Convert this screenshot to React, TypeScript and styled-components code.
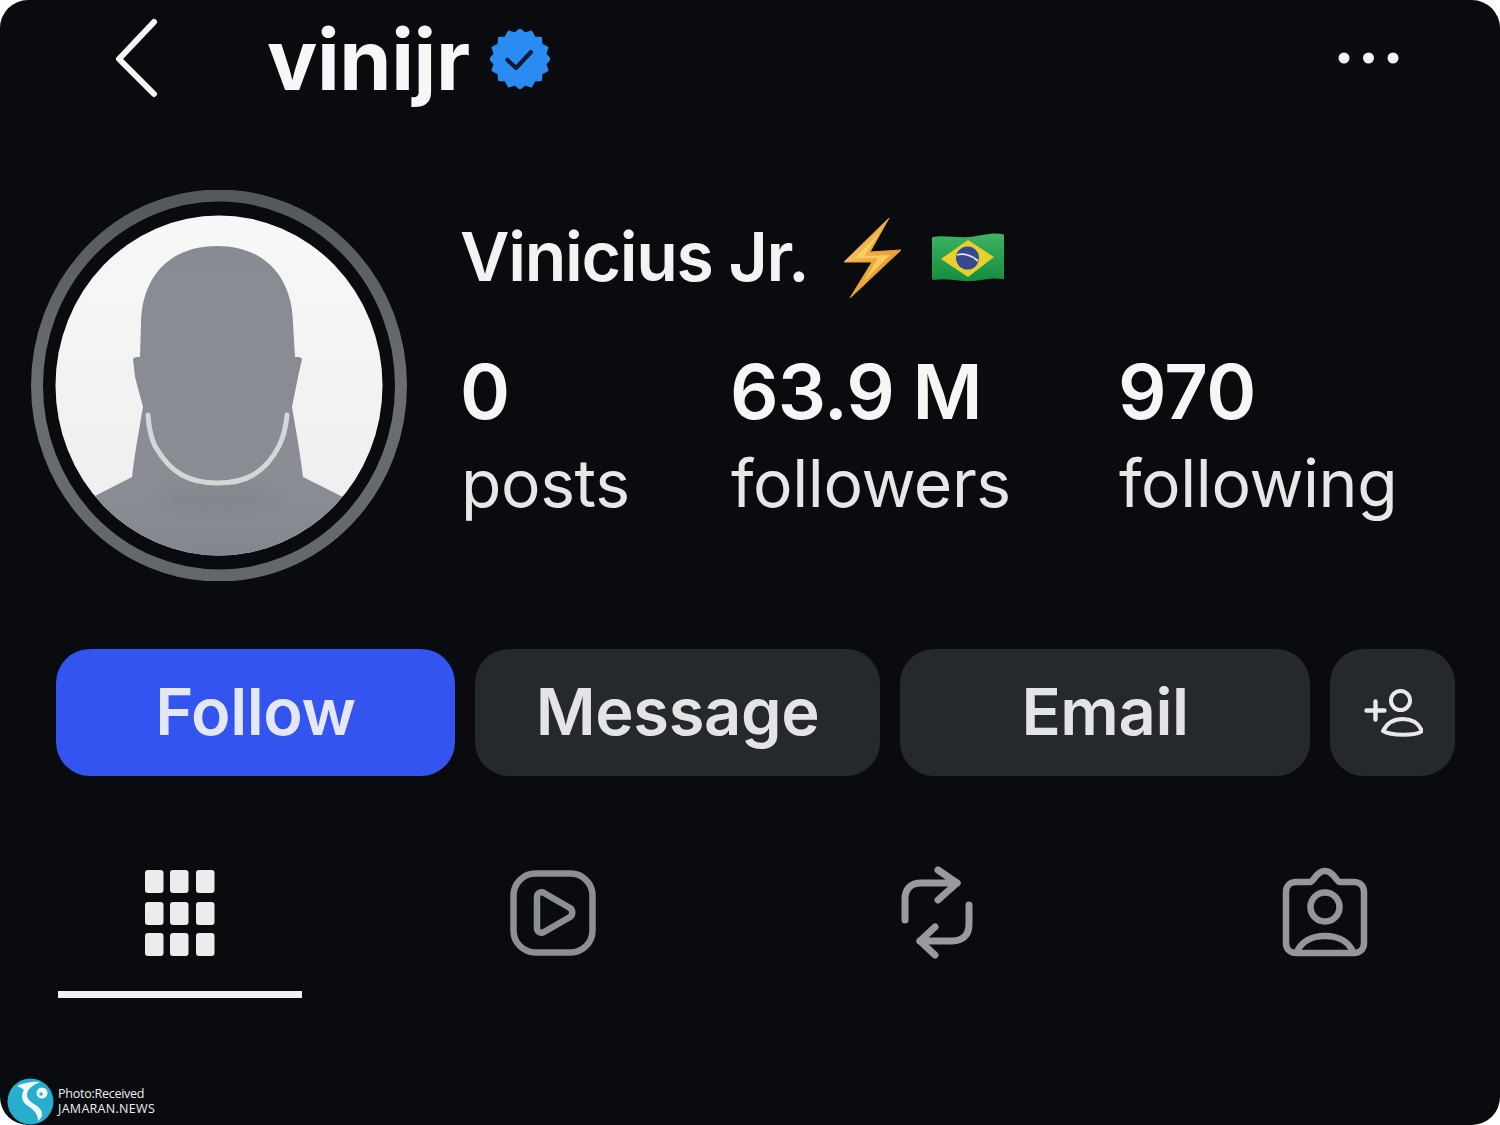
import React from "react";
import styled, { createGlobalStyle } from "styled-components";

const Global = createGlobalStyle`
  html, body { margin: 0; padding: 0; background: #ffffff; }
  #root { width: 1500px; height: 1125px; overflow: hidden; }
`;

const Frame = styled.main`
  position: relative;
  width: 1500px;
  height: 1125px;
  box-sizing: border-box;
  background: #090b0f;
  border-radius: 28px;
  overflow: hidden;
  font-family: Inter, "Liberation Sans", sans-serif;
  color: #f4f5f6;
`;

const Header = styled.header`
  display: flex;
  align-items: center;
  height: 116px;
  padding: 0 100px 0 115px;
`;

const BackButton = styled.div`
  display: flex;
  width: 152px;
`;

const Handle = styled.h1`
  margin: 3px 0 0;
  font-size: 84px;
  line-height: 113px;
  font-weight: 700;
  letter-spacing: -0.4px;
  color: #f7f7f8;
`;

const Spacer = styled.div`
  flex: 1;
`;

const Profile = styled.section`
  display: flex;
  margin-top: 74px;
  padding-left: 31px;
`;

const Info = styled.div`
  margin-left: 53px;
  display: flex;
  flex-direction: column;
`;

const NameRow = styled.div`
  display: flex;
  align-items: center;
  height: 108px;
  margin-top: 12px;
`;

const DisplayName = styled.h2`
  margin: 0;
  font-size: 68px;
  font-weight: 600;
  letter-spacing: -1.3px;
  color: #f2f3f4;
`;

const Stats = styled.div`
  display: grid;
  grid-template-columns: 270px 388px auto;
  margin-top: 34px;
`;

const Stat = styled.div`
  display: flex;
  flex-direction: column;
`;

const StatValue = styled.span`
  font-size: 76px;
  line-height: 94px;
  font-weight: 600;
  letter-spacing: -0.8px;
  color: #f6f6f7;
`;

const StatLabel = styled.span`
  margin-top: -2px;
  padding-left: 1px;
  font-size: 66px;
  line-height: 94px;
  font-weight: 400;
  letter-spacing: -0.4px;
  color: #e6e7e9;
`;

const Actions = styled.section`
  display: flex;
  gap: 20px;
  margin-top: 68px;
  padding-left: 56px;
`;

const ActionButton = styled.button<{ $width: number; $primary?: boolean }>`
  width: ${(p) => p.$width}px;
  height: 127px;
  padding: 0 0 3px;
  border: 0;
  border-radius: 34px;
  background: ${(p) => (p.$primary ? "#3354ee" : "#25282c")};
  color: ${(p) => (p.$primary ? "#e4e8f6" : "#e3e4e5")};
  font-family: inherit;
  font-size: 65px;
  font-weight: 600;
  letter-spacing: -0.4px;
  display: flex;
  align-items: center;
  justify-content: center;
`;

const Tabs = styled.nav`
  display: flex;
  margin-top: 90px;
  padding-left: 58px;
`;

const Tab = styled.div<{ $gap?: number; $active?: boolean }>`
  width: 244px;
  height: 132px;
  box-sizing: border-box;
  margin-left: ${(p) => p.$gap ?? 0}px;
  display: flex;
  justify-content: center;
  border-bottom: 7px solid ${(p) => (p.$active ? "#f0f1f1" : "transparent")};
`;

const Watermark = styled.aside`
  position: absolute;
  left: 7px;
  bottom: 0;
  display: flex;
  align-items: center;
  gap: 4px;
  font-family: "Open Sans", "Liberation Sans", sans-serif;
  font-size: 12.5px;
  line-height: 15px;
  color: #eef0f2;
`;

const WatermarkText = styled.div`
  display: flex;
  flex-direction: column;
  margin-bottom: 2px;
`;

const WatermarkLine = styled.span<{ $tracking: number }>`
  letter-spacing: ${(p) => p.$tracking}px;
`;

const Glyph = styled.svg<{ $left?: number; $top?: number }>`
  display: block;
  flex: none;
  margin-left: ${(p) => p.$left ?? 0}px;
  margin-top: ${(p) => p.$top ?? 0}px;
`;

const Back = () => (
  <Glyph width="46" height="80" viewBox="0 0 46 80" fill="none">
    <path d="M39 4 L4 41 L39 76" stroke="#f4f5f6" strokeWidth="6" strokeLinecap="round" strokeLinejoin="round" />
  </Glyph>
);

const badgePoints = (() => {
  const pts: string[] = [];
  for (let i = 0; i < 32; i++) {
    const r = i % 2 === 0 ? 30 : 26.2;
    const a = (i / 32) * Math.PI * 2;
    pts.push(`${(30 + r * Math.cos(a)).toFixed(2)},${(30 + r * Math.sin(a)).toFixed(2)}`);
  }
  return pts.join(" ");
})();

const Badge = () => (
  <Glyph width="60" height="60" viewBox="0 0 60 60" $left={20} $top={2}>
    <polygon points={badgePoints} fill="#2a8cf2" stroke="#2a8cf2" strokeWidth="1.5" strokeLinejoin="round" />
    <path d="M17.5 31 L26 39 L41 23" fill="none" stroke="#0e1a36" strokeWidth="4.2" strokeLinecap="round" strokeLinejoin="round" />
  </Glyph>
);

const More = () => (
  <Glyph width="62" height="16" viewBox="0 0 62 16">
    <circle cx="6" cy="8" r="5.5" fill="#f3f4f5" />
    <circle cx="30.5" cy="8" r="5.5" fill="#f3f4f5" />
    <circle cx="55" cy="8" r="5.5" fill="#f3f4f5" />
  </Glyph>
);

const Avatar = () => (
  <Glyph width="376" height="391" viewBox="0 0 376 391">
    <defs>
      <linearGradient id="ring" x1="0" y1="0" x2="0" y2="1">
        <stop offset="0" stopColor="#54585c" />
        <stop offset="0.5" stopColor="#6a6e72" />
        <stop offset="1" stopColor="#63676b" />
      </linearGradient>
      <linearGradient id="backdrop" x1="0" y1="0" x2="0" y2="1">
        <stop offset="0" stopColor="#f8f8f8" />
        <stop offset="1" stopColor="#ededee" />
      </linearGradient>
      <linearGradient id="figure" x1="0" y1="0" x2="0" y2="1">
        <stop offset="0" stopColor="#888b92" />
        <stop offset="0.75" stopColor="#8a8d93" />
        <stop offset="1" stopColor="#82858b" />
      </linearGradient>
      <filter id="soft" x="-30%" y="-30%" width="160%" height="160%">
        <feGaussianBlur stdDeviation="7" />
      </filter>
      <clipPath id="inner">
        <ellipse cx="188" cy="195.5" rx="163.5" ry="170" />
      </clipPath>
    </defs>
    <ellipse cx="188" cy="195.5" rx="182" ry="190" fill="none" stroke="url(#ring)" strokeWidth="12" />
    <ellipse cx="188" cy="195.5" rx="163.5" ry="170" fill="url(#backdrop)" />
    <g clipPath="url(#inner)">
      <path
        d="M60 308 L101 287 C104 262 108 240 112 217 L104 187 L102 169 C103 167 106 167 109 167 L110 133 C111 85 140 56 186 56 C232 56 261 85 262 133 L264 167 C267 167 270 167 271 169 L267 187 L261 217 C265 240 269 262 272 287 L314 308 L314 380 L60 380 Z"
        fill="url(#figure)"
      />
      <ellipse cx="186" cy="308" rx="60" ry="12" fill="#767980" opacity="0.28" filter="url(#soft)" />
      <path
        d="M117 225 C118 240 120 248 124 256 C132 270 140 279 151 285 C162 291 174 293 186 293 C198 293 212 291 222 285 C234 278 242 268 248 256 C253 246 255 236 256 225"
        fill="none"
        stroke="#d5d6d8"
        strokeWidth="5"
        strokeLinecap="round"
      />
    </g>
  </Glyph>
);

const Bolt = () => (
  <Glyph width="60" height="82" viewBox="0 0 60 82" $left={34} $top={4}>
    <defs>
      <linearGradient id="bolt" x1="0" y1="0" x2="1" y2="1">
        <stop offset="0" stopColor="#f6d78c" />
        <stop offset="0.5" stopColor="#eeaa3a" />
        <stop offset="1" stopColor="#e08c2a" />
      </linearGradient>
    </defs>
    <path d="M47 1 L2 45 L30 45 L8 81 L59 33 L28 35 Z" fill="url(#bolt)" stroke="#e8a034" strokeWidth="1" strokeLinejoin="round" />
    <path d="M38 15 L13 41 L36 41 L22 64 L48 38 L22 39 Z" fill="#fbd468" opacity="0.85" />
  </Glyph>
);

const Flag = () => (
  <Glyph width="74" height="54" viewBox="0 0 74 54" $left={29} $top={4}>
    <defs>
      <linearGradient id="flag" x1="0" y1="0" x2="0" y2="1">
        <stop offset="0" stopColor="#3fb364" />
        <stop offset="1" stopColor="#168c3d" />
      </linearGradient>
    </defs>
    <path d="M2 6 C14 4 24 7 37 6 C50 5 60 1 71 3 Q73 3 73 5 L73 47 Q73 49 71 48 C60 46 50 50 37 50 C24 50 14 47 3 49 Q1 49 1 47 L1 8 Q1 6 2 6 Z" fill="url(#flag)" />
    <path d="M10 28 L37 9 L63 26 L37 46 Z" fill="#e9d02c" />
    <circle cx="36.5" cy="27" r="11.5" fill="#34498f" />
    <path d="M26 24 C32 22 41 24 47 30" fill="none" stroke="#e6e9ee" strokeWidth="1.8" />
  </Glyph>
);

const AddUser = () => (
  <Glyph width="60" height="50" viewBox="0 0 60 50" fill="none" stroke="#e8e9ea" strokeLinecap="round" $top={3}>
    <path d="M3.5 22.5 H21.5 M12.5 13.5 V31.5" strokeWidth="4.4" />
    <circle cx="37.5" cy="12.5" r="9.5" strokeWidth="4" />
    <path d="M20 43 C24 35 30 31 40 31 C50 31 56 36 59 43 C53 48 28 48 20 43 Z" strokeWidth="4" strokeLinejoin="round" />
  </Glyph>
);

const GridIcon = () => (
  <Glyph width="70" height="86" viewBox="0 0 70 86" fill="#ececed" $top={4}>
    {[0, 32, 63].map((y) =>
      [0, 25, 51].map((x) => <rect key={`${x}-${y}`} x={x} y={y} width="18.5" height="23" rx="3" />)
    )}
  </Glyph>
);

const ReelIcon = () => (
  <Glyph width="86" height="86" viewBox="0 0 86 86" fill="none" stroke="#8c8f94" strokeWidth="6.5" strokeLinejoin="round" $top={4}>
    <rect x="3.5" y="3.5" width="79" height="79" rx="22" />
    <path d="M27 27 C27 23 31 21 34 23 L60 38 C63 40 63 45 60 47 L34 62 C31 64 27 62 27 58 Z" />
  </Glyph>
);

const RepostIcon = () => (
  <Glyph width="76" height="94" viewBox="0 0 76 94" fill="none" stroke="#989a9e" strokeWidth="7" strokeLinecap="round" strokeLinejoin="round">
    <path d="M6 54 V33 C6 23 12 17 22 17 H58" />
    <path d="M39 4 L58 17 L39 34" />
    <path d="M70 39 V58 C70 69 64 75 53 75 H21" />
    <path d="M36 61 L21 75 L36 89" />
  </Glyph>
);

const TagIcon = () => (
  <Glyph width="88" height="92" viewBox="0 0 88 92" fill="none" stroke="#94969a" strokeWidth="6.5" strokeLinecap="round" strokeLinejoin="round">
    <path d="M15 16 H29 C33 16 35 5 44 5 C53 5 55 16 59 16 H73 C79 16 83 20 83 26 V77 C83 83 79 87 73 87 H15 C9 87 5 83 5 77 V26 C5 20 9 16 15 16 Z" />
    <circle cx="44" cy="41" r="14.5" />
    <path d="M16 86 C20 76 30 70 44 70 C58 70 68 76 72 86" />
  </Glyph>
);

const LogoMark = () => (
  <Glyph width="47" height="47" viewBox="0 0 47 47">
    <circle cx="23.5" cy="23.5" r="23" fill="#27aecf" />
    <path d="M10 8 C16 5 26 3 33 4 C26 7 20 11 20 17 C20 24 30 26 34 32 C36 36 35 40 31 43 C31 36 27 32 21 28 C15 24 13 18 17 12 C15 10 12 9 10 8 Z" fill="#f2fafc" />
    <circle cx="35" cy="15" r="5.5" fill="#f2fafc" />
    <circle cx="34" cy="16" r="1.8" fill="#27aecf" />
  </Glyph>
);

export default function App() {
  return (
    <>
      <Global />
      <Frame>
        <Header>
          <BackButton>
            <Back />
          </BackButton>
          <Handle>vinijr</Handle>
          <Badge />
          <Spacer />
          <More />
        </Header>
        <Profile>
          <Avatar />
          <Info>
            <NameRow>
              <DisplayName>Vinicius Jr.</DisplayName>
              <Bolt />
              <Flag />
            </NameRow>
            <Stats>
              <Stat>
                <StatValue>0</StatValue>
                <StatLabel>posts</StatLabel>
              </Stat>
              <Stat>
                <StatValue>63.9 M</StatValue>
                <StatLabel>followers</StatLabel>
              </Stat>
              <Stat>
                <StatValue>970</StatValue>
                <StatLabel>following</StatLabel>
              </Stat>
            </Stats>
          </Info>
        </Profile>
        <Actions>
          <ActionButton $width={399} $primary>Follow</ActionButton>
          <ActionButton $width={405}>Message</ActionButton>
          <ActionButton $width={410}>Email</ActionButton>
          <ActionButton $width={125} aria-label="Add user">
            <AddUser />
          </ActionButton>
        </Actions>
        <Tabs>
          <Tab $active>
            <GridIcon />
          </Tab>
          <Tab $gap={129}>
            <ReelIcon />
          </Tab>
          <Tab $gap={140}>
            <RepostIcon />
          </Tab>
          <Tab $gap={144}>
            <TagIcon />
          </Tab>
        </Tabs>
        <Watermark>
          <LogoMark />
          <WatermarkText>
            <WatermarkLine $tracking={-0.25}>Photo:Received</WatermarkLine>
            <WatermarkLine $tracking={0.3}>JAMARAN.NEWS</WatermarkLine>
          </WatermarkText>
        </Watermark>
      </Frame>
    </>
  );
}
